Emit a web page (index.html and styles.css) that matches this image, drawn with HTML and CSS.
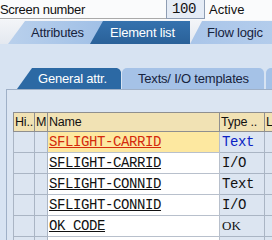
FILE: index.html
```html
<!DOCTYPE html>
<html>
<head>
<meta charset="utf-8">
<link rel="stylesheet" href="styles.css">
</head>
<body>
<div class="screen">
  <div class="top">
    <span class="label">Screen number</span>
    <span class="num">100</span>
    <span class="status">Active</span>
  </div>
  <div class="tabs">
    <div class="tab tab-attr">Attributes</div>
    <div class="tab tab-elem">Element list</div>
    <div class="tab tab-flow">Flow logic</div>
  </div>
  <div class="content">
    <div class="subtabs">
      <div class="stab stab-gen">General attr.</div>
      <div class="stab stab-txt">Texts/ I/O templates</div>
      <div class="stab stab-more"></div>
    </div>
    <div class="panel">
      <table class="grid">
        <colgroup>
          <col class="c-hi"><col class="c-m"><col class="c-name"><col class="c-type"><col class="c-l">
        </colgroup>
        <thead>
          <tr><th>Hi..</th><th>M</th><th>Name</th><th>Type ..</th><th>L</th></tr>
        </thead>
        <tbody>
          <tr class="sel"><td></td><td></td><td class="name red">SFLIGHT-CARRID</td><td class="type blue">Text</td><td></td></tr>
          <tr><td></td><td></td><td class="name">SFLIGHT-CARRID</td><td class="type">I/O</td><td></td></tr>
          <tr><td></td><td></td><td class="name">SFLIGHT-CONNID</td><td class="type">Text</td><td></td></tr>
          <tr><td></td><td></td><td class="name">SFLIGHT-CONNID</td><td class="type">I/O</td><td></td></tr>
          <tr><td></td><td></td><td class="name">OK_CODE</td><td class="type ok">OK</td><td></td></tr>
          <tr><td></td><td></td><td class="name"></td><td class="type"></td><td></td></tr>
        </tbody>
      </table>
    </div>
  </div>
</div>
</body>
</html>
```

FILE: styles.css
```css
html, body {
  margin: 0;
  padding: 0;
}
body {
  width: 272px;
  height: 240px;
  overflow: hidden;
  font-family: "Liberation Sans", Arial, sans-serif;
  font-size: 12.5px;
  color: #111;
  background: #d7e3f2;
}
.screen {
  width: 272px;
  height: 240px;
  overflow: hidden;
  display: flex;
  flex-direction: column;
}
.top {
  height: 20px;
  display: flex;
  align-items: flex-start;
  background: #fafbfc;
  flex: none;
}
.label {
  width: 166px;
  height: 19px;
  line-height: 19px;
  box-sizing: border-box;
  border-bottom: 1px solid #a9a9a9;
  padding-left: 0;
  font-size: 13px;
  letter-spacing: -0.3px;
}
.num {
  width: 39px;
  height: 19px;
  box-sizing: border-box;
  border: 1px solid #8e9db3;
  border-top: none;
  background: #e5ecf6;
  font-family: "Liberation Mono", monospace;
  font-size: 14px;
  line-height: 18px;
  padding-left: 5px;
  letter-spacing: -0.4px;
}
.status {
  margin-left: 4px;
  line-height: 19px;
  font-size: 13px;
}
.tabs {
  height: 24px;
  flex: none;
  display: flex;
  align-items: flex-end;
  background: linear-gradient(#f3f5f8, #e4e9f0);
  overflow: hidden;
}
.tab {
  height: 23px;
  line-height: 23px;
  flex: none;
  white-space: nowrap;
  font-size: 13px;
  letter-spacing: -0.2px;
}
.tab-attr {
  margin-left: 8px;
  width: 100px;
  padding-left: 23px;
  box-sizing: border-box;
  background: linear-gradient(90deg, #b9d0ec, #9fbfe6);
  color: #16233d;
  clip-path: polygon(17px 0, 100% 0, 100% 100%, 0 100%);
}
.tab-elem {
  margin-left: -18px;
  width: 100px;
  padding-left: 20px;
  box-sizing: border-box;
  background: linear-gradient(#3572ae, #2a6199);
  color: #fff;
  clip-path: polygon(13px 0, 100% 0, 100% 100%, 0 100%);
}
.tab-flow {
  width: 90px;
  padding-left: 17px;
  box-sizing: border-box;
  background: linear-gradient(90deg, #a9c5e9, #b4cdec);
  color: #16233d;
  clip-path: polygon(12px 0, 100% 0, 100% 100%, 0 100%);
}
.content {
  flex: 1;
  padding-top: 24px;
  background: #d7e3f2;
  display: flex;
  flex-direction: column;
}
.subtabs {
  height: 21px;
  display: flex;
  align-items: flex-end;
  flex: none;
}
.stab {
  height: 21px;
  line-height: 21px;
  flex: none;
  white-space: nowrap;
  box-sizing: border-box;
  font-size: 13px;
  letter-spacing: -0.2px;
}
.stab-gen {
  margin-left: 17px;
  width: 104px;
  padding-left: 21px;
  background: #2c69a4;
  color: #fff;
  clip-path: polygon(15px 0, 100px 0, 102px 1px, 103px 2px, 104px 4px, 104px 100%, 0 100%);
}
.stab-txt {
  margin-left: 1px;
  width: 142px;
  padding-left: 16px;
  background: #a5c2e7;
  color: #16233d;
  border-radius: 5px 5px 0 0;
}
.stab-more {
  margin-left: 2px;
  width: 20px;
  background: #a5c2e7;
  border-radius: 5px 0 0 0;
}
.panel {
  flex: 1;
  margin-left: 6px;
  border-left: 1px solid #9fb0c7;
  border-top: 1px solid #9fb0c7;
  background: #dbe5f2;
  padding: 22px 0 0 6px;
}
.grid {
  border-collapse: collapse;
  table-layout: fixed;
  width: 290px;
}
.c-hi { width: 21px; }
.c-m { width: 13px; }
.c-name { width: 172px; }
.c-type { width: 45px; }
.c-l { width: 39px; }
.grid th {
  height: 18px;
  padding: 0 0 0 1px;
  background: #f1e2b4;
  border: 1px solid #8f8f8f;
  font-weight: normal;
  text-align: left;
  font-size: 12.5px;
  white-space: nowrap;
  overflow: hidden;
  letter-spacing: -0.2px;
}
.grid td {
  height: 20px;
  padding: 0 0 0 1px;
  border: 1px solid #aab5c4;
  background: #dce5f1;
  white-space: nowrap;
  overflow: hidden;
  font-family: "Liberation Mono", "DejaVu Sans Mono", monospace;
  font-size: 14px;
  letter-spacing: -0.4px;
}
.grid td.name {
  background: #ffffff;
  text-decoration: underline;
  border-color: #b8c0cc;
}
.grid tr.sel td.name {
  background: #fde8a0;
}
.grid td.red {
  color: #d42a0c;
}
.grid td.type {
  padding-left: 2px;
}
.grid td.blue {
  color: #0a1fc4;
}
.grid td.ok {
  font-family: "Liberation Serif", serif;
  font-size: 13px;
  letter-spacing: 0;
}
```
